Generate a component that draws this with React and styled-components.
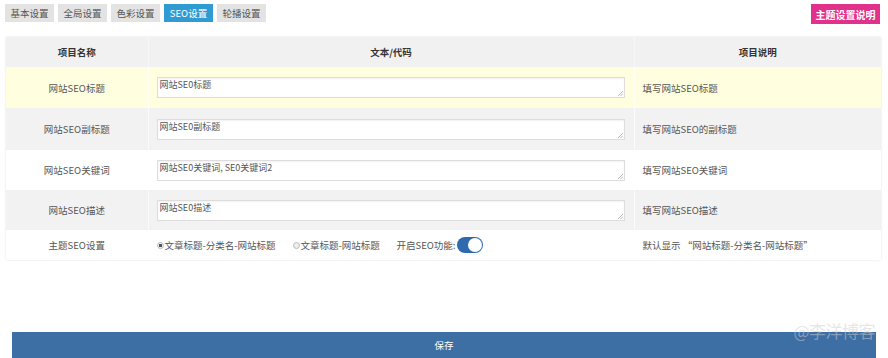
import React from "react";
import styled, { createGlobalStyle } from "styled-components";

const Global = createGlobalStyle`
  html, body { margin: 0; padding: 0; background: #fff; }
  body { font-family: "Microsoft YaHei", "Noto Sans CJK SC", sans-serif; color: #555; }
  * { box-sizing: border-box; }
`;

const Page = styled.div`
  width: 888px;
  height: 358px;
  overflow: hidden;
  position: relative;
  padding: 4px 8px 0 5px;
`;

const TopBar = styled.div`
  display: flex;
  justify-content: space-between;
  align-items: flex-start;
  height: 33px;
`;

const Tabs = styled.div`
  display: flex;
  gap: 4px;
`;

const Tab = styled.div`
  height: 18px;
  width: 49px;
  display: flex;
  align-items: center;
  justify-content: center;
  font-size: 9.5px;
  background: ${(p) => (p.$active ? "#2f9bd2" : "#e3e3e3")};
  color: ${(p) => (p.$active ? "#fff" : "#555")};
`;

const HelpButton = styled.div`
  height: 20px;
  width: 69px;
  display: flex;
  align-items: center;
  justify-content: center;
  background: #e2318a;
  color: #fff;
  font-size: 10px;
  font-weight: bold;
`;

const Table = styled.table`
  width: 875px;
  margin-left: 1px;
  border-collapse: collapse;
  table-layout: fixed;
  box-shadow: 0 0 2px rgba(0, 0, 0, 0.12);
  font-size: 9.5px;
`;

const HeadCell = styled.th`
  height: 30px;
  background: #f1f1f1;
  color: #333;
  font-weight: bold;
  font-size: 9.5px;
  text-align: center;
  border-left: 1px solid #f7f7f7;
  &:first-child { border-left: none; }
`;

const Row = styled.tr`
  background: ${(p) => p.$bg};
  height: ${(p) => p.$h}px;
`;

const Cell = styled.td`
  padding: 0 8px;
  vertical-align: middle;
  text-align: ${(p) => (p.$center ? "center" : "left")};
  border-left: 1px solid rgba(255, 255, 255, 0.7);
  color: #555;
  &:first-child { border-left: none; }
`;

const Area = styled.div`
  position: relative;
  height: 21px;
  background: #fff;
  border: 1px solid #ddd;
  box-shadow: inset 0 1px 2px rgba(0, 0, 0, 0.06);
  font-size: 9px;
  line-height: 12px;
  padding: 1px 2px;
  color: #555;
  width: 468px;
`;

const Grip = styled.svg`
  position: absolute;
  right: 1px;
  bottom: 1px;
`;

const Options = styled.div`
  display: flex;
  align-items: center;
  font-size: 9.5px;
`;

const Radio = styled.span`
  display: inline-block;
  width: 7px;
  height: 7px;
  border-radius: 50%;
  border: 1px solid #bbb;
  background: ${(p) => (p.$on ? "radial-gradient(circle, #555 0 1.6px, #eee 2px)" : "#eee")};
  margin-right: 1px;
`;

const Option = styled.label`
  display: flex;
  align-items: center;
  width: ${(p) => p.$w}px;
`;

const Toggle = styled.span`
  display: inline-block;
  position: relative;
  width: 26px;
  height: 16px;
  border-radius: 8px;
  background: #2e6aad;
  margin-left: 2px;
  &::after {
    content: "";
    position: absolute;
    right: 1px;
    top: 1px;
    width: 14px;
    height: 14px;
    border-radius: 50%;
    background: #fff;
  }
`;

const SaveBar = styled.div`
  margin: 72px 4px 0 7px;
  height: 26px;
  background: #3d6ea4;
  color: #fff;
  font-size: 9.5px;
  display: flex;
  align-items: center;
  justify-content: center;
`;

const Watermark = styled.div`
  position: absolute;
  right: 13px;
  top: 318px;
  font-size: 17px;
  color: rgba(205, 205, 205, 0.5);
  letter-spacing: -0.5px;
`;

const rows = [
  { label: "网站SEO标题", value: "网站SE0标题", desc: "填写网站SEO标题", bg: "#ffffe0", h: 41 },
  { label: "网站SEO副标题", value: "网站SE0副标题", desc: "填写网站SEO的副标题", bg: "#f2f2f2", h: 42 },
  { label: "网站SEO关键词", value: "网站SE0关键词, SE0关键词2", desc: "填写网站SEO关键词", bg: "#ffffff", h: 40 },
  { label: "网站SEO描述", value: "网站SE0描述", desc: "填写网站SEO描述", bg: "#f2f2f2", h: 40 },
];

export default function App() {
  return (
    <Page>
      <Global />
      <TopBar>
        <Tabs>
          <Tab>基本设置</Tab>
          <Tab>全局设置</Tab>
          <Tab>色彩设置</Tab>
          <Tab $active>SEO设置</Tab>
          <Tab>轮播设置</Tab>
        </Tabs>
        <HelpButton>主题设置说明</HelpButton>
      </TopBar>
      <Table>
        <colgroup>
          <col style={{ width: 142 }} />
          <col style={{ width: 486 }} />
          <col />
        </colgroup>
        <thead>
          <tr>
            <HeadCell>项目名称</HeadCell>
            <HeadCell>文本/代码</HeadCell>
            <HeadCell>项目说明</HeadCell>
          </tr>
        </thead>
        <tbody>
          {rows.map((r) => (
            <Row key={r.label} $bg={r.bg} $h={r.h}>
              <Cell $center>{r.label}</Cell>
              <Cell>
                <Area>
                  {r.value}
                  <Grip width="5" height="5" viewBox="0 0 5 5">
                    <path d="M5 0 L0 5 M5 2.5 L2.5 5" stroke="#aaa" strokeWidth="0.8" />
                  </Grip>
                </Area>
              </Cell>
              <Cell>{r.desc}</Cell>
            </Row>
          ))}
          <Row $bg="#ffffff" $h={30}>
            <Cell $center>主题SEO设置</Cell>
            <Cell>
              <Options>
                <Option $w={136}>
                  <Radio $on />
                  文章标题-分类名-网站标题
                </Option>
                <Option $w={104}>
                  <Radio />
                  文章标题-网站标题
                </Option>
                <Option>
                  开启SEO功能:
                  <Toggle />
                </Option>
              </Options>
            </Cell>
            <Cell>默认显示 “网站标题-分类名-网站标题”</Cell>
          </Row>
        </tbody>
      </Table>
      <SaveBar>保存</SaveBar>
      <Watermark>@李洋博客</Watermark>
    </Page>
  );
}
